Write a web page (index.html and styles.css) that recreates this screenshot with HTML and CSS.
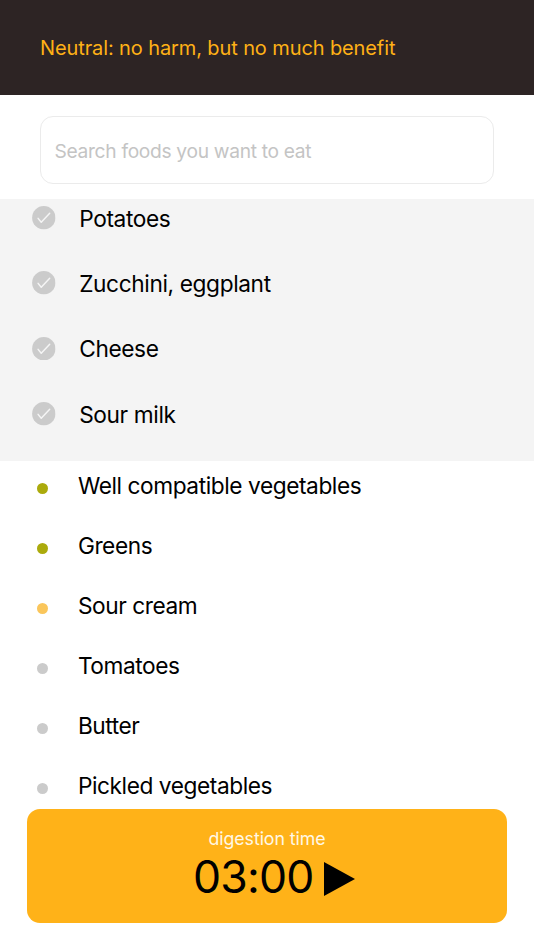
FILE: index.html
```html
<!DOCTYPE html>
<html lang="en">
<head>
<meta charset="utf-8">
<meta name="viewport" content="width=device-width, initial-scale=1">
<title>Food compatibility</title>
<link rel="stylesheet" href="styles.css">
</head>
<body>
<svg class="defs" width="0" height="0" aria-hidden="true">
  <symbol id="check" viewBox="0 0 24 24">
    <circle cx="12" cy="12" r="11.9" fill="#cbcbcb"/>
    <path d="M6.2 12.6 L9.4 16.6 L18 7.3" fill="none" stroke="#f5f5f5" stroke-width="1.5" stroke-linecap="round" stroke-linejoin="round"/>
  </symbol>
</svg>
<div class="app">
  <header class="header"><h1 class="title">Neutral: no harm, but no much benefit</h1></header>
  <div class="search"><div class="search-box"><span>Search foods you want to eat</span></div></div>
  <ul class="selected">
    <li><svg class="check"><use href="#check"/></svg><span>Potatoes</span></li>
    <li><svg class="check"><use href="#check"/></svg><span>Zucchini, eggplant</span></li>
    <li><svg class="check"><use href="#check"/></svg><span>Cheese</span></li>
    <li><svg class="check"><use href="#check"/></svg><span>Sour milk</span></li>
  </ul>
  <ul class="foods">
    <li><i class="dot good"></i><span>Well compatible vegetables</span></li>
    <li><i class="dot good"></i><span>Greens</span></li>
    <li><i class="dot fair"></i><span>Sour cream</span></li>
    <li><i class="dot"></i><span>Tomatoes</span></li>
    <li><i class="dot"></i><span>Butter</span></li>
    <li><i class="dot"></i><span>Pickled vegetables</span></li>
  </ul>
  <div class="timer">
    <div class="timer-label">digestion time</div>
    <div class="timer-row"><span class="clock">03:00</span><svg class="play" viewBox="0 0 31 34"><path d="M0 0 L31 17 L0 34 Z"/></svg></div>
  </div>
</div>
</body>
</html>
```
FILE: styles.css
```css
* { box-sizing: border-box; }
body {
  margin: 0;
  background: #fff;
  color: #000;
  font-family: Inter, "Liberation Sans", sans-serif;
}
.defs { position: absolute; }
.app {
  height: 950px;
  overflow: hidden;
  display: flex;
  flex-direction: column;
}
.header {
  flex: none;
  height: 95.3px;
  padding: 0 40px;
  background: #2d2424;
  display: flex;
  align-items: center;
}
.title {
  margin: 0;
  font-size: 20px;
  font-weight: 400;
  line-height: 24px;
  letter-spacing: -0.11px;
  color: #ffb116;
  white-space: nowrap;
}
.search { flex: none; height: 103.5px; padding: 21px 40px 0; }
.search-box {
  height: 68px;
  padding: 2px 13.5px 0;
  border: 1.5px solid #ebebeb;
  border-radius: 13px;
  display: flex;
  align-items: center;
  font-size: 19.2px;
  letter-spacing: -0.31px;
  color: #c4c4c4;
}
ul { list-style: none; margin: 0; padding: 0; flex: none; }
li {
  display: flex;
  align-items: center;
  font-size: 22.7px;
  line-height: 28px;
  letter-spacing: -0.43px;
  white-space: nowrap;
}
.selected {
  height: 262px;
  overflow: hidden;
  background: #f4f4f4;
  display: flex;
  flex-direction: column;
}
.selected li {
  flex: none;
  height: 65.3px;
  padding-left: 32px;
  gap: 23.6px;
  letter-spacing: -0.38px;
}
.selected li span { padding-top: 2px; }
.selected li:first-child { margin-top: -13.6px; }
.check { width: 23.6px; height: 23.6px; flex: none; }
.foods { height: 348.2px; overflow: hidden; }
.foods li { height: 60px; padding-left: 37px; gap: 29.5px; }
.foods li:first-child { margin-top: -5px; }
.dot {
  width: 11.4px;
  height: 11.4px;
  margin-top: 6px;
  border-radius: 50%;
  background: #cbcbcb;
}
.dot.good { background: #abaa0c; }
.dot.fair { background: #fac65b; }
.timer {
  flex: none;
  height: 113.6px;
  margin: 0 27px;
  padding-top: 19px;
  border-radius: 13px;
  background: #ffb218;
  display: flex;
  flex-direction: column;
  align-items: center;
}
.timer-label { font-size: 17.8px; line-height: 22px; letter-spacing: -0.08px; color: #fff8e6; }
.timer-row { display: flex; align-items: center; gap: 10.5px; height: 54px; margin-left: 14px; }
.clock { font-size: 44.5px; line-height: 54px; letter-spacing: -0.8px; }
.play { width: 31px; height: 34px; margin-top: 4px; }
```
